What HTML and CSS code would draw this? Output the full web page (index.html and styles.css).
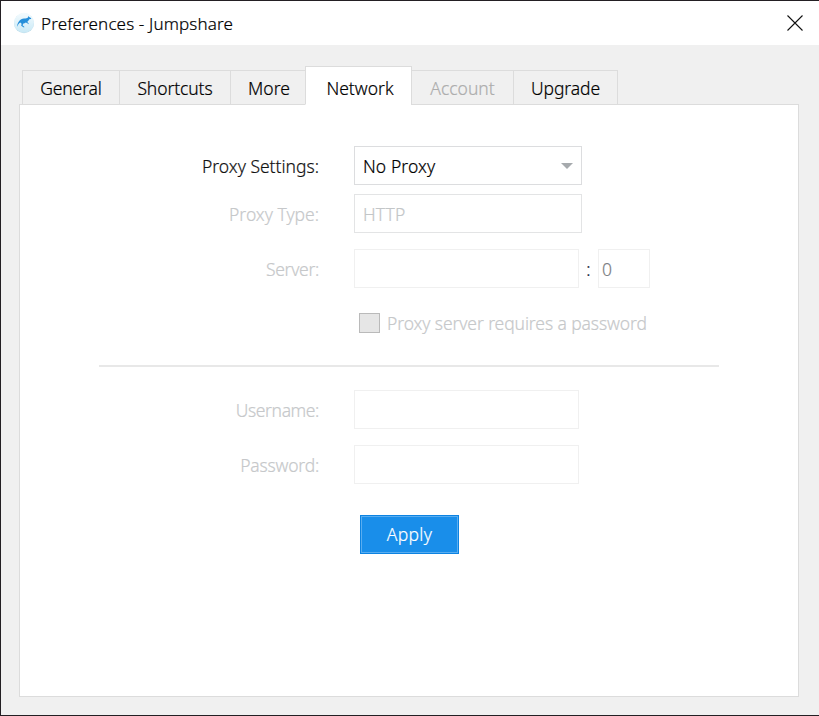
FILE: index.html
```html
<!DOCTYPE html>
<html lang="en">
<head>
<meta charset="utf-8">
<title>Preferences - Jumpshare</title>
<link rel="stylesheet" href="styles.css">
</head>
<body>
<div class="window">
  <header class="titlebar">
    <svg class="logo" width="22" height="22" viewBox="0 0 22 22">
      <defs><linearGradient id="disc" x1="0" y1="0" x2="0" y2="1"><stop offset="0" stop-color="#f4fbfe"/><stop offset="1" stop-color="#c9e9f6"/></linearGradient></defs>
      <circle cx="11" cy="11.2" r="10" fill="#bfdce8"/>
      <circle cx="11" cy="10.7" r="10" fill="url(#disc)"/>
      <path d="M4 14.8C4.6 10 7 6.800 11 6.500C13 6.400 14.100 6.600 15.100 5.300L15.300 4.100L16.200 5L18.300 6.300L17.900 7.100L16.300 7.300C15.700 8.300 15.100 9.300 14.200 10L15.700 11.200L15.200 12.200L14.500 11.300L12.800 10.500C12 11.100 11.200 11.300 10.400 11.600L9.500 13.300L11.500 14.900L10.900 15.400L8.200 13.700L8.600 11.700L7.300 10.600C5.700 11.500 5 13.100 4 14.800Z" fill="#268fda"/>
    </svg>
    <h1 class="title">Preferences - Jumpshare</h1>
    <svg class="close" width="16" height="16" viewBox="0 0 16 16"><path d="M.5.5l15 15M15.500.5l-15 15" stroke="#111" stroke-width="1.100"/></svg>
  </header>
  <main class="content">
    <nav class="tabs">
      <div class="tab general"><span>General</span></div>
      <div class="tab shortcuts"><span>Shortcuts</span></div>
      <div class="tab more"><span>More</span></div>
      <div class="tab network active"><span>Network</span></div>
      <div class="tab account disabled"><span>Account</span></div>
      <div class="tab upgrade"><span>Upgrade</span></div>
    </nav>
    <section class="panel">
      <div class="row settings">
        <div class="label"><span>Proxy Settings:</span></div>
        <div class="select"><span>No Proxy</span><svg width="12" height="6" viewBox="0 0 12 6"><path d="M0 0h12L6 6z" fill="#a6aaad"/></svg></div>
      </div>
      <div class="row type">
        <div class="label"><span>Proxy Type:</span></div>
        <div class="select off"><span>HTTP</span></div>
      </div>
      <div class="row server">
        <div class="label"><span>Server:</span></div>
        <div class="input"></div>
        <div class="colon">:</div>
        <div class="input port">0</div>
      </div>
      <div class="check"><i class="box"></i><span>Proxy server requires a password</span></div>
      <div class="rule"></div>
      <div class="row username">
        <div class="label"><span>Username:</span></div>
        <div class="input"></div>
      </div>
      <div class="row password">
        <div class="label"><span>Password:</span></div>
        <div class="input"></div>
      </div>
      <div class="apply"><span>Apply</span></div>
    </section>
  </main>
</div>
</body>
</html>
```
FILE: styles.css
```css
* { box-sizing: border-box; }
body {
  margin: 0;
  font: 300 17.5px/24px "Noto Sans", "Open Sans", sans-serif;
  color: #000;
  -webkit-text-stroke: 0.2px currentColor;
}
svg { display: block; }
.window {
  width: 819px;
  height: 716px;
  background: #f0f0f0;
  border: solid #231f23;
  border-width: 1px 0 1px 1px;
  overflow: hidden;
}
.titlebar {
  height: 44px;
  display: flex;
  align-items: center;
  padding: 0 16px 0 12px;
  background: #fff;
}
.title {
  margin: 0 auto 0 6px;
  padding-top: 1px;
  font-size: 17px;
  font-weight: inherit;
  letter-spacing: 0.14px;
}
.content { padding: 21px 20px 0 18px; }
.tabs {
  display: flex;
  align-items: flex-end;
  height: 39px;
  padding-left: 3px;
  margin-bottom: -1px;
  position: relative;
}
.tab {
  height: 35px;
  display: flex;
  align-items: center;
  justify-content: center;
  border: 1px solid #dcdcdc;
  margin-right: -1px;
  white-space: nowrap;
}
.general { width: 98px; letter-spacing: -0.15px; }
.shortcuts { width: 112px; letter-spacing: -0.1px; }
.more { width: 76px; padding-left: 2px; }
.network { width: 107px; padding-left: 3px; }
.account { width: 103px; }
.upgrade { width: 105px; letter-spacing: -0.1px; }
.active {
  height: 39px;
  padding-top: 4px;
  background: #fff;
  border-bottom-color: #fff;
}
.disabled { color: #adadad; }
.panel {
  height: 593px;
  padding-top: 41px;
  background: #fff;
  border: 1px solid #dcdcdc;
}
.row {
  display: flex;
  height: 39px;
  line-height: 39px;
}
.label {
  width: 299px;
  margin-right: 35px;
  padding-top: 1px;
  display: flex;
  justify-content: flex-end;
  color: #c6c8ca;
  white-space: nowrap;
}
.settings .label { color: #111; }
.type { margin-top: 9px; }
.server { margin-top: 16px; }
.server .label { letter-spacing: -0.3px; }
.password .label { letter-spacing: -0.2px; }
.username .label { letter-spacing: -0.4px; }
.select {
  width: 228px;
  display: flex;
  align-items: center;
  justify-content: space-between;
  padding: 0 8px;
  border: 1px solid #dcdddf;
}
.select span { padding-top: 2px; letter-spacing: 0.1px; }
.off { color: #c3c6c8; border-color: #e3e4e5; }
.input { width: 225px; border: 1px solid #f0f0f0; }
.colon { width: 19px; padding-top: 1px; text-align: center; color: #123; }
.port { width: 52px; padding-left: 3px; line-height: 39px; color: #7c7e83; }
.check {
  display: flex;
  align-items: center;
  height: 24px;
  margin: 23px 0 0 339px;
  color: #c6c8ca;
  letter-spacing: -0.1px;
}
.box {
  width: 21px;
  height: 20px;
  margin-right: 7px;
  background: #e6e6e6;
  border: 1px solid #bababa;
}
.rule { width: 620px; height: 2px; margin: 30px 0 0 79px; background: #e8e8e8; }
.username { margin-top: 23px; }
.password { margin-top: 16px; }
.apply {
  width: 99px;
  height: 39px;
  margin: 31px 0 0 340px;
  padding-bottom: 1px;
  display: flex;
  align-items: center;
  justify-content: center;
  color: #fff;
  letter-spacing: 0.3px;
  background: #198eea;
  border: 1px solid #0c83e2;
  box-shadow: inset 0 0 0 1px #59adf0;
}
```
